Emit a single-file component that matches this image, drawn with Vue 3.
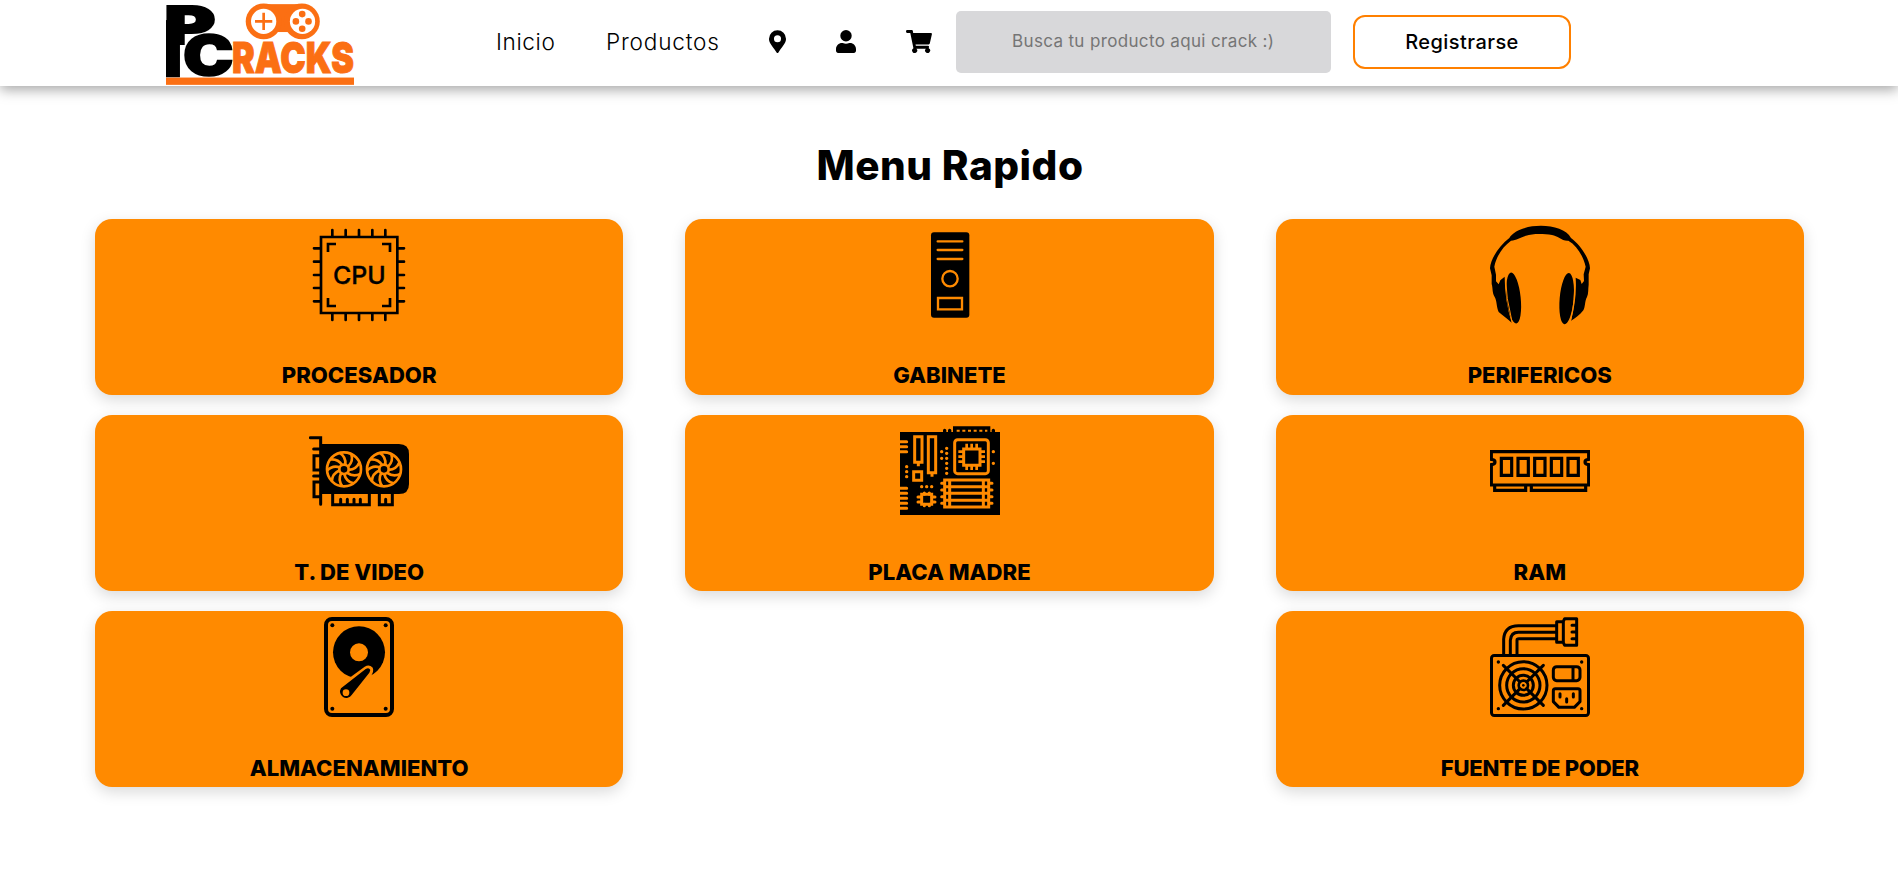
<script setup>
const blades = Array.from({ length: 9 }, (_, i) => i * 40)
const fans = [162, 282]
</script>

<template>
  <header class="bar">
    <svg class="logo" viewBox="48 12 566 243" aria-label="PC Cracks">
      <rect x="48" y="233" width="566" height="22" fill="#fb6f13" />
      <g fill="#fb6f13">
        <rect x="335" y="12" width="130" height="84" />
        <circle cx="342" cy="64" r="54" />
        <circle cx="457" cy="64" r="54" />
      </g>
      <circle cx="342" cy="64" r="38" fill="#fff" />
      <circle cx="459" cy="64" r="38" fill="#fff" />
      <path d="M342 38v52M316 64h52" stroke="#fb6f13" stroke-width="8" />
      <g fill="#fb6f13">
        <circle cx="458" cy="42" r="10" /><circle cx="458" cy="86" r="10" />
        <circle cx="439" cy="64" r="10" /><circle cx="477" cy="64" r="10" />
      </g>
      <rect x="48" y="60" width="42" height="172" />
      <text class="heavy big-p" x="43" y="131" font-size="158" textLength="154" lengthAdjust="spacingAndGlyphs">P</text>
      <text class="heavy big-c" x="99" y="226" font-size="164" textLength="152" lengthAdjust="spacingAndGlyphs">C</text>
      <text class="heavy racks" x="247" y="218" font-size="129" textLength="367" lengthAdjust="spacingAndGlyphs">RACKS</text>
    </svg>
    <nav class="nav">
      <a class="link inicio">Inicio</a>
      <a class="link productos">Productos</a>
      <svg class="pin" viewBox="0 0 384 512"><path d="M172 502C27 291 0 270 0 192a192 192 0 0 1 384 0c0 78-27 99-172 310a24 24 0 0 1-40 0zM192 272a80 80 0 1 0 0-160 80 80 0 0 0 0 160z" /></svg>
      <svg class="user" viewBox="0 0 448 512"><path d="M224 256a128 128 0 1 0 0-256 128 128 0 0 0 0 256zm90 32h-17a174 174 0 0 1-146 0h-17C60 288 0 348 0 422v42c0 27 21 48 48 48h352c27 0 48-21 48-48v-42c0-74-60-134-134-134z" /></svg>
      <svg class="cart" viewBox="0 0 576 512"><path d="m528 301 47-208a24 24 0 0 0-23-29H159l-9-45a24 24 0 0 0-24-19H24A24 24 0 0 0 0 24v16c0 13 11 24 24 24h70l70 343a56 56 0 1 0 67 9h210a56 56 0 1 0 64-10l5-25a24 24 0 0 0-23-29H218l-7-32h294c11 0 21-8 23-19z" /></svg>
    </nav>
    <div class="search"><span>Busca tu producto aqui crack :)</span></div>
    <button class="signup"><span>Registrarse</span></button>
  </header>

  <main>
    <h1>Menu Rapido</h1>
    <div class="grid">
      <section class="card first-row">
        <svg viewBox="57 30 300 300" fill="none" stroke="#000" stroke-width="8">
          <path d="M93 66h229v228H93z" />
          <path stroke-linecap="round" d="M127 45v20m40-20v20m40-20v20m40-20v20m39-20v20M127 296v19m40-19v19m40-19v19m40-19v19m39-19v19M72 100h20m-20 40h20m-20 40h20m-20 39h20m-20 40h20M323 100h19m-19 40h19m-19 40h19m-19 39h19m-19 40h19" />
          <path d="M114 111V87h24M276 87h24v24M114 249v24h24M276 273h24v-24" />
          <text class="cpu" x="129" y="206" textLength="158" lengthAdjust="spacingAndGlyphs">CPU</text>
        </svg>
        <h2>PROCESADOR</h2>
      </section>

      <section class="card first-row">
        <svg viewBox="90 30 300 300">
          <rect x="183" y="52" width="115" height="256" rx="9" />
          <g fill="none" stroke="#ff8a00" stroke-width="7">
            <path stroke-linecap="round" d="M203 79h74M203 105h74M203 132h74" />
            <circle cx="240" cy="191" r="23" />
            <path d="M204 249h72v34h-72z" />
          </g>
        </svg>
        <h2>GABINETE</h2>
      </section>

      <section class="card first-row">
        <svg viewBox="90 30 300 300">
          <path d="M90 160C91 132 118 92 148 69C175 22 307 19 333 69C362 90 389 132 390 160L386 178L386 209C384 222 386 235 381 246C374 258 376 276 370 286C360 300 345 310 333 317C344 275 350 234 347 188L361 195L365 207L372 198L371 178L377 155C369 122 351 92 325 77C306 79 293 62 276 60C252 56 218 55 198 62C181 67 169 76 153 77C128 95 109 124 103 155L108 179L108 199L116 208L121 196L134 185C134 232 141 278 155 323C144 312 127 301 116 291C109 275 111 258 104 246C96 233 99 220 95 207L95 181z" />
          <ellipse cx="161" cy="249" rx="21" ry="77" transform="rotate(-6 161 249)" />
          <ellipse cx="320" cy="251" rx="21" ry="77" transform="rotate(5 320 251)" />
          <path d="M136 184Q138 251 156 320" fill="none" stroke="#ff8a00" stroke-width="3" />
          <path d="M343 190Q347 254 332 316" fill="none" stroke="#ff8a00" stroke-width="3" />
        </svg>
        <h2>PERIFERICOS</h2>
      </section>

      <section class="card">
        <svg viewBox="57 3 300 300">
          <path d="M92 72h235q30 0 30 30v90q0 30-30 30H92z" />
          <g fill="none" stroke="#000" stroke-width="9" stroke-linecap="round">
            <path d="M61 53h31v200M71 87h20M71 168h20M91 107H72v43h19M91 186H72v44h19" />
            <path stroke-linecap="butt" d="M128 220v34h110v-34M268 220v34h39v-34" />
            <path d="M152 238v15M172 238v15M192 238v15M211 238v15M287 238v15" />
          </g>
          <g v-for="x in fans" :key="x" :transform="`translate(${x} 148)`" fill="none" stroke="#ff8a00" stroke-width="8">
            <circle r="51" />
            <circle r="14" />
            <path v-for="a in blades" :key="a" d="M12-8Q29-24 22-46" :transform="`rotate(${a})`" />
          </g>
        </svg>
        <h2>T. DE VIDEO</h2>
      </section>

      <section class="card">
        <svg viewBox="120 18 300 300">
          <path d="M120 51h129v-6q5-8 10 0v6h5v-6q5-8 10 0v6h5V34h112v17h4v-6q5-8 10 0v6h15v249H120z" />
          <g fill="none" stroke="#ff8a00" stroke-width="9">
            <path stroke-width="6" stroke-dasharray="9 8" d="M290 47h92" />
            <path stroke-linecap="round" d="M118 80h22M118 95h22M118 110h22M118 220h22M118 235h22M118 250h22M118 265h22M118 280h22" />
            <path d="M164 65h22v77h-22zM175 142v12M205 65h22v108h-22zM216 173v12M161 170h24v26h-24z" />
            <rect x="284" y="74" width="101" height="102" rx="9" />
            <path d="M311 102h49v49h-49z" />
            <path stroke-width="8" d="M320 86v14m15-14v14m15-14v14M320 151v14m15-14v14m15-14v14M295 110h14m-14 15h14m-14 15h14M361 110h14m-14 15h14m-14 15h14" />
            <path d="M185 238h30v30h-30z" />
            <path stroke-linecap="round" d="M193 234v4m15-4v4M193 268v4m15-4v4M174 246h9m-9 15h9M216 246h9m-9 15h9" />
            <path d="M254 195h132v81H254zM269 195v81M370 195v81M254 215h132M254 235h132M254 256h132" />
            <path stroke-linecap="round" d="M245 205h8m-8 20h8m-8 20h8m-8 20h8M388 205h8m-8 20h8m-8 20h8m-8 20h8" />
            <path stroke-width="10" stroke-linecap="round" d="M140 155h.1M140 170h.1M140 185h.1M185 215h.1M200 215h.1M215 215h.1M245 110h.1M245 130h.1M260 100h.1M260 115h.1M260 130h.1M260 145h.1M260 160h.1M260 175h.1M400 110h.1M400 145h.1" />
          </g>
        </svg>
        <h2>PLACA MADRE</h2>
      </section>

      <section class="card">
        <svg viewBox="90 3 300 300" fill="none" stroke="#000" stroke-width="9.500">
          <path d="M94 95h292v23q-11 1-11 8t11 8v61H94v-61q11-1 11-8t-11-8z" />
          <path d="M104 195v16h93v-16M214 195v16h163v-16" />
          <path d="M124 115h31v51h-31zM174 115h31v51h-31zM224 115h31v51h-31zM274 115h31v51h-31zM324 115h31v51h-31z" />
        </svg>
        <h2>RAM</h2>
      </section>

      <section class="card">
        <svg viewBox="207 36 300 300">
          <rect x="258" y="42" width="198" height="288" rx="18" fill="none" stroke="#000" stroke-width="12" />
          <circle cx="277" cy="61" r="6" /><circle cx="437" cy="61" r="6" />
          <circle cx="277" cy="311" r="6" /><circle cx="437" cy="311" r="6" />
          <circle cx="357" cy="142" r="78" />
          <circle cx="357" cy="142" r="27" fill="#ff8a00" />
          <path d="M330 222L376 188Q387 181 395 190Q399 198 389 213L375 233z" fill="#ff8a00" stroke="#ff8a00" stroke-width="7" />
          <path d="M303 250L377 192Q387 186 391 195L388 203L335 270A18 18 0 1 1 303 250z" />
          <circle cx="318" cy="263" r="10" fill="#ff8a00" />
        </svg>
        <h2>ALMACENAMIENTO</h2>
      </section>

      <section class="card last">
        <svg viewBox="180 36 300 300" fill="none" stroke="#000" stroke-width="9" stroke-linejoin="round">
          <rect x="184.500" y="151.500" width="291" height="180" rx="8" />
          <path d="M221 149V102Q224 62 265 62H378M241 149V106Q243 82 265 82H378M261 149V105Q261 101 267 101H378" />
          <path d="M380 50h20v62h-20zM404 41h36v80h-36l-4-8V49z" />
          <path stroke-linecap="round" d="M426 61h13M426 81h13M426 101h13" />
          <circle cx="280" cy="241" r="71" /><circle cx="280" cy="241" r="50" />
          <circle cx="280" cy="241" r="30" /><circle cx="280" cy="241" r="14" stroke-width="8" />
          <path stroke-linecap="round" d="M220 181l50 50M290 251l50 50M340 181l-50 50M270 251l-50 50" />
          <circle cx="280" cy="241" r="4" fill="#000" stroke="none" />
          <rect x="370" y="185" width="80" height="42" rx="10" />
          <path d="M429 185v42M376 251h68q6 0 6 6v33l-17 17h-46l-17-17v-33q0-6 6-6z" />
          <path stroke-linecap="round" d="M390 266v10M430 266v10M410 281v10" />
          <path stroke-width="10" stroke-linecap="round" d="M205 171h.1M455 171h.1M205 311h.1M455 311h.1" />
        </svg>
        <h2 class="fuente">FUENTE DE PODER</h2>
      </section>
    </div>
  </main>
</template>

<style>
body {
  background: #fff;
}
</style>

<style scoped>
* {
  box-sizing: border-box;
}
.bar, main {
  font-family: Inter, "Open Sans", sans-serif;
  color: #000;
}
.bar {
  height: 86px;
  display: flex;
  padding-left: 166px;
  background: #fff;
  box-shadow: 0 4px 12px rgba(0, 0, 0, 0.34);
}
.logo {
  width: 188px;
  height: 81px;
  margin: 4px 142px 0 0;
  flex: none;
  overflow: visible;
}
.heavy {
  font-family: Inter, sans-serif;
  font-weight: 900;
}
.big-p {
  stroke: #000;
  stroke-width: 6px;
}
.big-c {
  stroke: #000;
  stroke-width: 5px;
  filter: drop-shadow(-1px 0 0 #fff) drop-shadow(0 -1px 0 #fff);
}
.racks {
  fill: #fb6f13;
  stroke: #fb6f13;
  stroke-width: 3px;
}
.nav {
  display: flex;
  width: 460px;
  flex: none;
  height: 83px;
  align-items: center;
}
.link {
  font-size: 22.6px;
  font-weight: 300;
  white-space: nowrap;
  flex: none;
}
.inicio {
  width: 110px;
  letter-spacing: 0.6px;
}
.productos {
  width: 163px;
  letter-spacing: 0.8px;
}
.nav svg {
  height: 23px;
  flex: none;
}
.pin {
  width: 17px;
  margin-right: 50px;
}
.user {
  width: 20px;
  margin-right: 50px;
}
.cart {
  width: 26px;
}
.search {
  width: 375px;
  height: 62px;
  margin-top: 11px;
  padding-left: 56px;
  border-radius: 5px;
  background: #d8d8da;
  color: #757575;
  font-size: 17px;
  letter-spacing: 0.35px;
  line-height: 61px;
  white-space: nowrap;
  flex: none;
}
.signup {
  width: 218px;
  height: 54px;
  margin: 15px 0 0 22px;
  padding: 0;
  border: 2px solid #ff8000;
  border-radius: 12px;
  background: #fff;
  color: #000;
  font: 500 20px/50px Inter, sans-serif;
  letter-spacing: 0.45px;
  white-space: nowrap;
}
main {
  padding-bottom: 60px;
}
h1 {
  margin: 0;
  height: 133px;
  padding: 50px 0 0 2px;
  font-size: 40.5px;
  line-height: 60px;
  font-weight: 850;
  letter-spacing: 0.5px;
  text-align: center;
}
.grid {
  display: grid;
  grid-template-columns: repeat(3, 1fr);
  grid-auto-rows: 176px;
  gap: 20px 62px;
  margin: 0 94px 0 95px;
}
.card {
  display: flex;
  flex-direction: column;
  align-items: center;
  padding-top: 6px;
  border-radius: 17px;
  background: #ff8a00;
  box-shadow: 0 5px 15px rgba(0, 0, 0, 0.15);
}
.card svg {
  width: 100px;
  height: 100px;
  flex: none;
}
.card:nth-child(3n + 2) svg {
  margin-left: 1px;
}
.cpu {
  font: 500 71px Inter, sans-serif;
  fill: #000;
  stroke: #000;
  stroke-width: 1px;
}
h2 {
  margin: 35px 0 0;
  font-size: 22.1px;
  line-height: 32px;
  font-weight: 800;
  white-space: nowrap;
}
.first-row h2 {
  margin-top: 34px;
}
.fuente {
  letter-spacing: -0.3px;
}
.last {
  grid-column: 3;
}
</style>
